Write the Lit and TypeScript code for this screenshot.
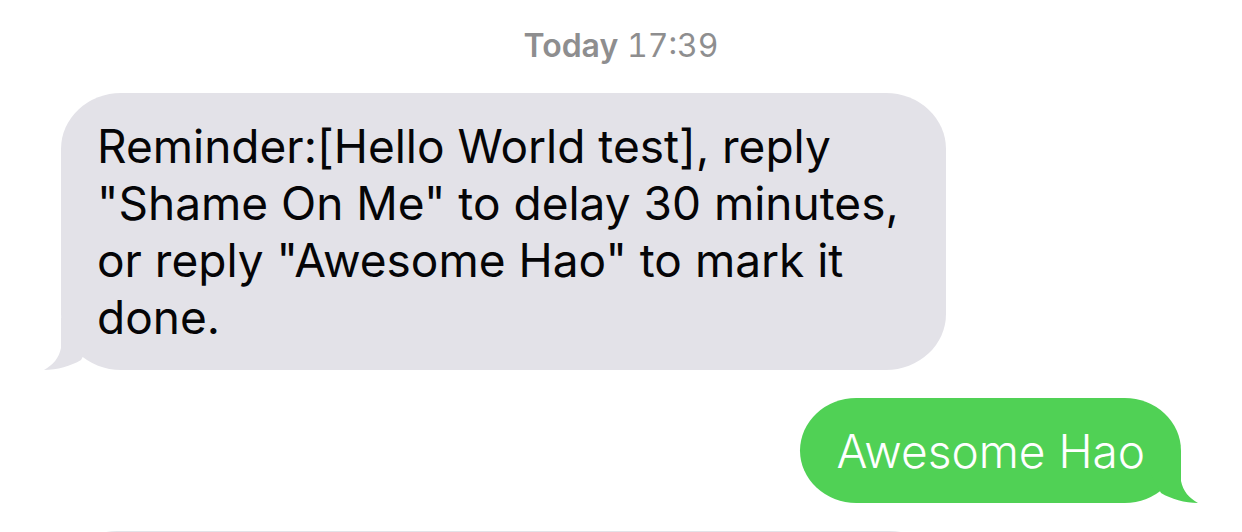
import { LitElement, html, css } from "lit";
import { customElement, property } from "lit/decorators.js";

@customElement("message-bubble")
class MessageBubble extends LitElement {
  @property({ type: Boolean, reflect: true }) sent = false;

  static styles = css`
    :host {
      position: relative;
      isolation: isolate;
      display: block;
      box-sizing: border-box;
      min-height: 105px;
      padding: 25px 36px 24px;
      border-radius: 60px / 56px;
      background: #e3e2e8;
      color: #050507;
      font-size: 46px;
      line-height: 57px;
    }
    :host([sent]) {
      padding-bottom: 23px;
      background: #50d155;
      color: #fff;
      font-weight: 300;
    }
    .tail {
      position: absolute;
      z-index: -1;
      left: -18px;
      bottom: 0;
      width: 60px;
      height: 52px;
      fill: #e3e2e8;
    }
    :host([sent]) .tail {
      left: auto;
      right: -18px;
      fill: #50d155;
      transform: scaleX(-1);
    }
  `;

  render() {
    return html`<svg class="tail" viewBox="0 0 60 52" aria-hidden="true">
        <path d="M18 0V30C16 40 10 47 1 52C14 52 28 48 38 42L50 20V0Z" />
      </svg>
      <slot></slot>`;
  }
}

@customElement("app-root")
class AppRoot extends LitElement {
  static styles = css`
    :host {
      display: block;
      height: 100vh;
      overflow: hidden;
      background: #fff;
      font-family: Inter, "Liberation Sans", sans-serif;
    }
    .thread {
      display: flex;
      flex-direction: column;
      align-items: flex-start;
      gap: 28px;
      padding: 26px 61px;
    }
    .stamp {
      align-self: center;
      font-size: 32px;
      line-height: 39px;
      font-variant-numeric: tabular-nums;
      color: #8e8e8f;
    }
    .stamp b {
      font-weight: 600;
    }
    .received {
      max-width: 885px;
    }
    .pending {
      width: 100%;
    }
    .sent {
      align-self: flex-end;
    }
  `;

  render() {
    return html`<main class="thread">
      <time class="stamp"><b>Today</b> 17:39</time>
      <message-bubble class="received"
        >Reminder:[Hello World test], reply "Shame On Me" to delay 30 minutes, or reply "Awesome Hao" to mark it done.</message-bubble
      >
      <message-bubble class="sent" sent>Awesome Hao</message-bubble>
      <message-bubble class="received pending"></message-bubble>
    </main>`;
  }
}
